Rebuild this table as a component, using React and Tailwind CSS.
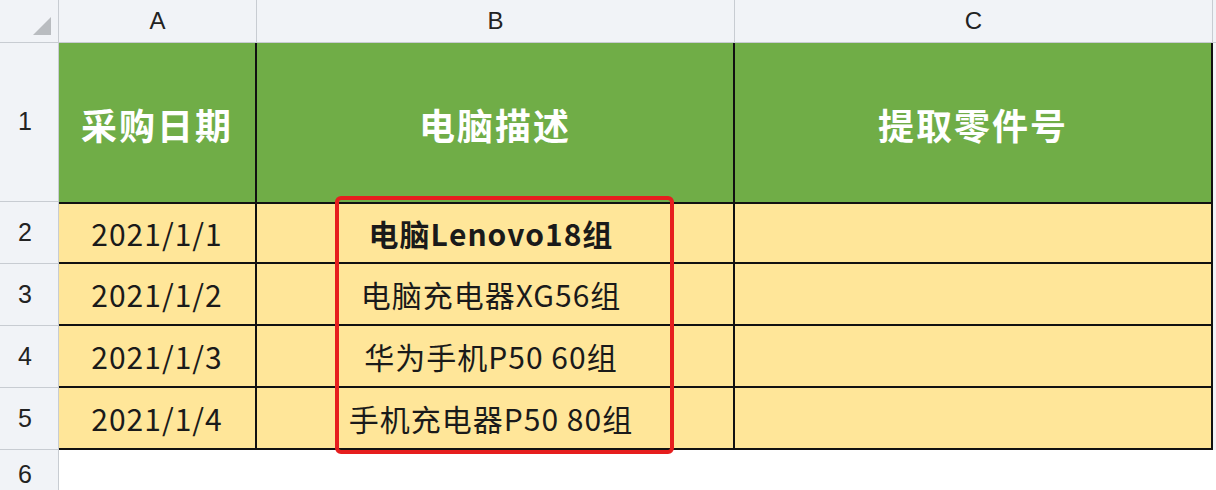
import React from 'react';

const COLS = ['A', 'B', 'C'];
const ROWS = [
  ['2021/1/1', '电脑Lenovo18组', true],
  ['2021/1/2', '电脑充电器XG56组', false],
  ['2021/1/3', '华为手机P50 60组', false],
  ['2021/1/4', '手机充电器P50 80组', false],
];
const W = ['w-[198px]', 'w-[478px]', 'w-[478px]'];

export default function App() {
  const font = { fontFamily: '"Microsoft YaHei", "Noto Sans CJK SC", "Noto Sans", sans-serif' };
  return (
    <div className="relative w-[1216px] h-[490px] overflow-hidden bg-white text-[#1a1a1a]" style={font}>
      {/* column headers */}
      <div className="flex h-[43px] bg-[#f1f3f7] border-b border-[#c8ccd2]">
        <div className="w-[59px] shrink-0 border-r border-[#c8ccd2] flex items-end justify-end pr-[7px] pb-[7px]">
          <div className="w-0 h-0 border-l-[18px] border-l-transparent border-b-[18px] border-b-[#b9bcc0]" />
        </div>
        {COLS.map((c, i) => (
          <div key={c} className={`${W[i]} shrink-0 border-r border-[#c8ccd2] flex items-center justify-center text-[24px] font-['Liberation_Sans'] text-[#222]`}>
            {c}
          </div>
        ))}
        <div className="flex-1" />
      </div>

      {/* row 1 */}
      <div className="flex h-[159px]">
        <RowHead n={1} />
        {['采购日期', '电脑描述', '提取零件号'].map((t, i) => (
          <div key={t} className={`${W[i]} shrink-0 bg-[#70ad47] border-r-2 border-[#111] flex items-center justify-center text-white font-bold text-[36px] tracking-[2px] pt-[2px]`}>
            {t}
          </div>
        ))}
        <div className="flex-1 bg-[#f1f3f7]" />
      </div>

      {/* data rows */}
      {ROWS.map(([d, desc, bold], r) => (
        <div key={d} className="flex h-[62px]">
          <RowHead n={r + 2} />
          <Cell w={W[0]} top={r === 0}>{d}</Cell>
          <Cell w={W[1]} top={r === 0} bold={bold} shift>{desc}</Cell>
          <Cell w={W[2]} top={r === 0} />
          <div className="flex-1 bg-[#f1f3f7]" />
        </div>
      ))}

      {/* row 6 */}
      <div className="flex h-[50px]">
        <RowHead n={6} />
        <div className="flex-1 bg-white" />
      </div>

      {/* highlight box */}
      <div className="absolute left-[335px] top-[196px] w-[339px] h-[258px] border-4 border-[#e61e1e] rounded-[6px]" />
    </div>
  );
}

function RowHead({ n }) {
  return (
    <div className="w-[59px] shrink-0 bg-[#f1f3f7] border-r border-b border-[#c8ccd2] flex items-center justify-center text-[25px] text-[#222] font-['Liberation_Sans'] pr-[8px]">
      {n}
    </div>
  );
}

function Cell({ w, top, bold, shift, children }) {
  return (
    <div className={`${w} shrink-0 bg-[#ffe699] border-r-2 border-b-2 border-[#111] ${top ? 'border-t-2' : ''} flex items-center justify-center text-[30px] tracking-[1px] ${bold ? 'font-bold' : ''} ${shift ? 'pr-[8px]' : ''}`}>
      {children}
    </div>
  );
}
